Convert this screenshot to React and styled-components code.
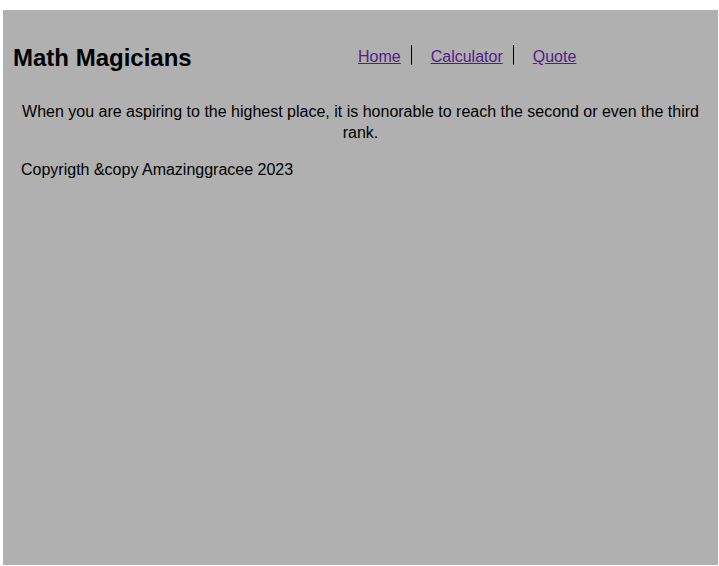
import React from "react";
import styled, { createGlobalStyle } from "styled-components";

const GlobalStyle = createGlobalStyle`
  html, body { margin: 0; padding: 0; background: #ffffff; }
  body { font-family: "Liberation Sans", Arial, sans-serif; color: #000; }
`;

const Page = styled.div`
  padding: 10px 1px 1px 3px;
`;

const Board = styled.div`
  background: #b0b0b0;
  height: 555px;
  padding: 33px 10px 0 10px;
  box-sizing: border-box;
`;

const Header = styled.header`
  display: grid;
  grid-template-columns: 335px auto;
  align-items: start;
`;

const Title = styled.h1`
  margin: 1px 0 -1px 0;
  font-size: 24px;
  font-weight: 700;
  line-height: 28px;
`;

const NavList = styled.ul`
  display: flex;
  list-style: none;
  margin: 2px 0 0 0;
  padding: 0;
`;

const NavItem = styled.li`
  padding: 3px 10px 0 10px;
  height: 20px;
  box-sizing: border-box;
  line-height: 17px;
  font-size: 16px;
  border-right: ${(p) => (p.$last ? "none" : "1px solid #000")};
  & + & { margin-left: 9px; }
`;

const NavLink = styled.a`
  color: #551a8b;
  text-decoration: underline;
`;

const Quote = styled.p`
  margin: 30px 0 0 0;
  font-size: 16px;
  line-height: 21px;
  text-align: center;
`;

const Footer = styled.p`
  margin: 17px 0 0 8px;
  font-size: 16px;
  line-height: 20px;
`;

const links = ["Home", "Calculator", "Quote"];

export default function App() {
  return (
    <>
      <GlobalStyle />
      <Page>
        <Board>
          <Header>
            <Title>Math Magicians</Title>
            <nav>
              <NavList>
                {links.map((l, i) => (
                  <NavItem key={l} $last={i === links.length - 1}>
                    <NavLink href="#">{l}</NavLink>
                  </NavItem>
                ))}
              </NavList>
            </nav>
          </Header>
          <Quote>
            When you are aspiring to the highest place, it is honorable to reach the second or even the third rank.
          </Quote>
          <Footer>Copyrigth &amp;copy Amazinggracee 2023</Footer>
        </Board>
      </Page>
    </>
  );
}
